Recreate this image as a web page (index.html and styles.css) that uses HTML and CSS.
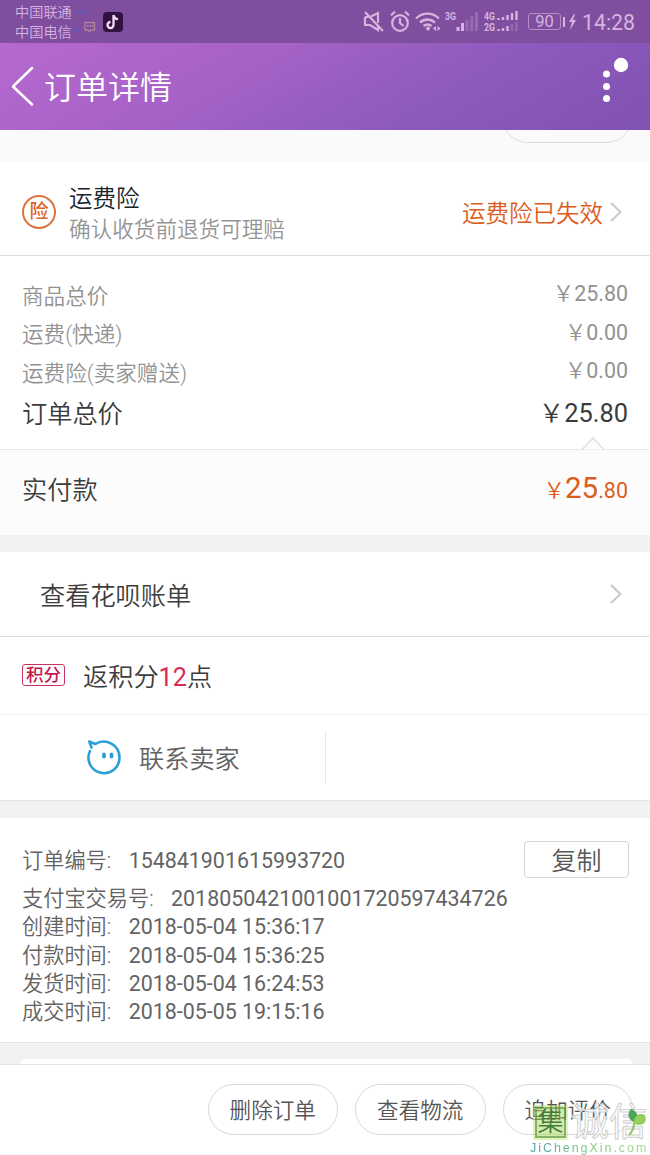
FILE: index.html
```
<!DOCTYPE html>
<html lang="zh-CN">
<head>
<meta charset="utf-8">
<title>订单详情</title>
<link rel="stylesheet" href="styles.css">
</head>
<body>
<div class="screen">
  <div class="status">
    <div class="carriers"><span>中国联通</span><span>中国电信</span></div>
    <svg class="status-left" width="52" height="43" viewBox="0 0 52 43" fill="none">
      <path d="M15 15a10 10 0 1 0-7 16" stroke="#6558b8" stroke-width="2.500" opacity=".7"/>
      <path d="M13 22.500h9.500v7.500h-3.500l-1.500 1.500-1.500-1.500h-3z" stroke="#b08595" stroke-width="1.300"/>
      <path d="M15 26h1.500m1 0h1.500m1 0h1.500" stroke="#b08595" stroke-width="2"/>
      <rect x="31" y="12" width="20" height="20" rx="4" fill="#321340"/>
      <path d="M41.500 15v10a3 3 0 1 1-3-3M41.500 15c.4 2.700 2 4 4.500 4.200" stroke="#f2dff5" stroke-width="2.300"/>
    </svg>
    <svg class="status-right" width="172" height="43" viewBox="0 0 172 43" fill="none" stroke="#d5b4e0" stroke-width="2.200">
      <path d="M3 12l18 19M3 17h5l8-4v10M3 17v8h5l8 5v-4"/>
      <circle cx="38" cy="23" r="7.800"/><path d="M38 18v5l3.500 3M29 15.500l4-4M47 15.500l-4-4"/>
      <path d="M54 18.500c6.500-6.500 16.500-6.500 23 0M58 22.500c4.500-4 10.500-4 15 0M61.500 26c2.500-2 5.500-2 8 0" stroke-width="2.400"/>
      <circle cx="66" cy="28.500" r="2" fill="#d5b4e0" stroke="none"/>
      <path d="M74 26v5l-3-2.500zM75.500 26v5l3-2.500z" fill="#d5b4e0" stroke="none"/>
      <g stroke-width="3"><path d="M96 31v-4M100.500 31v-8"/><path opacity=".28" d="M105 31V19.500M109.700 31V16M114.500 31V12"/></g>
      <g stroke-width="2.400"><path d="M136.500 20v-2M141 20v-3M145.500 20v-5M150 20v-7M154.500 20v-9M136.500 31v-2M141 31v-3M145.500 31v-5"/><path opacity=".28" d="M150 31v-7M154.500 31v-9"/></g>
      <g class="net" fill="#d5b4e0" stroke="none"><text x="83" y="20" textLength="11" lengthAdjust="spacingAndGlyphs">3G</text><text x="122" y="20" textLength="11" lengthAdjust="spacingAndGlyphs">4G</text><text x="122" y="31" textLength="11" lengthAdjust="spacingAndGlyphs">2G</text></g>
    </svg>
    <div class="battery">90</div>
    <svg class="bolt" width="14" height="18" viewBox="0 0 14 18" fill="#d5b4e0"><path d="M0 4h2v10H0zM11 1L6 9h3l-2 8 6-10h-3l2-6z"/></svg>
    <div class="clock">14:28</div>
  </div>
  <div class="header">
    <svg width="24" height="42" viewBox="0 0 24 42" fill="none" stroke="#fff" stroke-width="2.500" stroke-linecap="round" stroke-linejoin="round"><path d="M21 2L2 20.500 21 38.500"/></svg>
    <h1>订单详情</h1>
    <svg class="more" width="40" height="60" viewBox="0 0 40 60" fill="#fff"><circle cx="6.500" cy="24" r="3.500"/><circle cx="6.500" cy="36.500" r="3.500"/><circle cx="6.500" cy="48.500" r="3.500"/><circle cx="21" cy="15" r="7.200"/></svg>
  </div>
  <div class="strip"><div class="strip-pill"></div></div>
  <div class="insurance">
    <div class="badge">险</div>
    <div class="ins-text"><div class="ins-title">运费险</div><div class="ins-sub">确认收货前退货可理赔</div></div>
    <div class="ins-state">运费险已失效</div>
    <svg class="chev" width="14" height="24" viewBox="0 0 14 24"><path d="M2 3l9.500 9L2 21"/></svg>
  </div>
  <div class="totals">
    <div class="line"><span>商品总价</span><span class="amount"><i>￥</i>25.80</span></div>
    <div class="line"><span>运费(快递)</span><span class="amount"><i>￥</i>0.00</span></div>
    <div class="line"><span>运费险(卖家赠送)</span><span class="amount"><i>￥</i>0.00</span></div>
    <div class="line grand"><span>订单总价</span><span class="amount"><i>￥</i>25.80</span></div>
  </div>
  <div class="paid">
    <svg class="notch" width="26" height="14" viewBox="0 0 26 14"><path d="M2 13.500L13 2l11 11.500" fill="#fcfcfc" stroke="#dedede" stroke-width="1.500"/></svg>
    <span class="paid-label">实付款</span><span class="pay"><small><i>￥</i></small>25<small>.80</small></span>
  </div>
  <div class="gap"></div>
  <div class="bill"><span>查看花呗账单</span><svg class="chev" width="14" height="24" viewBox="0 0 14 24"><path d="M2 3l9.500 9L2 21"/></svg></div>
  <div class="points"><span class="tag">积分</span><span>返积分<b>12</b>点</span></div>
  <div class="contact">
    <div class="seller">
      <svg width="38" height="38" viewBox="0 0 38 38" fill="none" stroke="#2c9fd4" stroke-width="2.600" stroke-linecap="round" stroke-linejoin="round"><path d="M6.500 8.500L4.300 2.500l6 2.500C21-1.500 34.500 6 34.500 18.500a15.500 15.500 0 1 1-29.500-6.500"/><path d="M19 15.500v2M26.500 15.500v2" stroke-width="3.800"/></svg>
      <span>联系卖家</span>
    </div>
  </div>
  <div class="gap"></div>
  <div class="order">
    <div class="row first"><span>订单编号:</span><span>154841901615993720</span><button>复制</button></div>
    <div class="row"><span>支付宝交易号:</span><span>2018050421001001720597434726</span></div>
    <div class="row"><span>创建时间:</span><span>2018-05-04 15:36:17</span></div>
    <div class="row"><span>付款时间:</span><span>2018-05-04 15:36:25</span></div>
    <div class="row"><span>发货时间:</span><span>2018-05-04 16:24:53</span></div>
    <div class="row"><span>成交时间:</span><span>2018-05-05 19:15:16</span></div>
  </div>
  <div class="tail"><div class="card-top"></div></div>
  <div class="footer">
    <div class="pill">删除订单</div><div class="pill">查看物流</div><div class="pill">追加评价</div>
    <div class="mark">
      <div class="mark-name"><span class="mark-box">集</span><span class="mark-outline">诚信</span></div>
      <svg class="leaf" width="20" height="30" viewBox="0 0 20 30"><path d="M3 1c6 2 9 8 5 14C-1 12-1 5 3 1z" fill="#4fa55b"/><path d="M6 16C5 8 11 4 17 7c3 8-3 12-11 9z" fill="#94ce5c"/><path d="M6 15c0 6-2 9-5 12" fill="none" stroke="#8bc565" stroke-width="2"/></svg>
      <div class="mark-url">JiChengXin.com</div>
    </div>
  </div>
</div>
</body>
</html>
```
FILE: styles.css
```
* { box-sizing: border-box; }
body { margin: 0; font-family: Roboto, "Noto Sans CJK SC", sans-serif; font-weight: 350; color: #3d3d3d; background: #fff; }
i { font-style: normal; font-weight: 350; }
.screen { width: 650px; height: 1155px; overflow: hidden; display: flex; flex-direction: column; }
.screen > div { flex: none; }

.status { height: 43px; background: #804e9e; display: flex; align-items: center; color: #d5b4e0; padding-left: 15px; }
.carriers { display: flex; flex-direction: column; width: 57px; font-size: 14.200px; line-height: 19.500px; padding-top: 2px; white-space: nowrap; }
.status-right { margin-left: 238px; }
.net { font: bold 11px Roboto, sans-serif; }
.battery { width: 33px; height: 17px; margin-left: -6px; border: 1px solid #b68bc6; border-radius: 3px; font-size: 16.500px; line-height: 16px; text-align: center; font-weight: 400; }
.bolt { margin-left: 2px; }
.clock { font-size: 21.300px; margin-left: 5px; line-height: 42px; padding-top: 2px; font-weight: 400; }

.header { height: 87px; display: flex; align-items: center; padding-left: 11px; background: linear-gradient(150deg, #b669cf 0%, #a662c7 35%, #8e5abd 66%, #8052b2 100%); }
h1 { margin: 0 0 0 9px; color: #fff; font-size: 32px; font-weight: 350; line-height: 87px; padding-top: 4px; }
.more { margin: -13px 10px 0 auto; }

.strip { height: 32px; background: #fafafa; }
.strip-pill { width: 130px; height: 51px; border: 1px solid #dfdcdf; border-radius: 26px; margin: -38px 0 0 502px; clip-path: inset(38px 0 0 0); }

.insurance { height: 94px; border-bottom: 1px solid #dedede; display: flex; align-items: center; padding: 6px 27px 0 22px; }
.badge { width: 34px; height: 34px; border: 2px solid #dc7442; border-radius: 50%; color: #dc6429; font-size: 19px; line-height: 30px; text-align: center; font-weight: 500; }
.ins-text { margin-left: 13px; white-space: nowrap; padding-top: 6px; }
.ins-title { font-size: 23.500px; line-height: 31px; color: #17232d; }
.ins-sub { font-size: 21.600px; line-height: 30px; color: #949494; }
.ins-state { margin-left: auto; color: #dc5c20; font-size: 23.500px; line-height: 34px; padding-top: 4px; }
.chev { fill: none; stroke: #c8c8c8; stroke-width: 2; margin-left: 6px; }

.totals { height: 193px; padding: 21.500px 22px 0; font-size: 21.600px; color: #929292; }
.line { height: 38.500px; line-height: 38.500px; display: flex; justify-content: space-between; }
.amount { margin-top: -2.500px; font-weight: 400; font-size: 21.400px; }
.grand { height: 44px; line-height: 44px; font-size: 25.200px; color: #3b3b3b; }
.grand .amount { font-size: 25.400px; }

.paid { height: 86px; border-top: 1px solid #e9e9e9; background: #fcfcfc; padding: 0 22px 6px; display: flex; justify-content: space-between; align-items: center; font-size: 25.200px; position: relative; }
.paid-label { padding-bottom: 4px; }
.notch { position: absolute; right: 44px; top: -14px; }
.pay { color: #dc5c20; font-size: 29.500px; line-height: 44px; font-weight: 400; }
.pay small { font-size: 21.500px; }
.gap { height: 17px; background: #f2f2f2; }

.bill { height: 85px; border-bottom: 1px solid #dedede; padding: 0 27px 0 40px; display: flex; align-items: center; justify-content: space-between; font-size: 25.200px; }
.points { height: 78px; border-bottom: 1px solid #f1f1f1; padding: 0 22px 2px; display: flex; align-items: center; font-size: 25.200px; }
.tag { width: 43px; height: 22px; border: 1px solid #c93362; border-radius: 3px; margin: 0 18px 0 0; color: #c3184e; font-size: 17.500px; line-height: 20px; text-align: center; font-weight: 500; }
.points b { color: #d42d58; font-weight: 400; }
.contact { height: 86px; border-bottom: 1px solid #e3e3e3; display: flex; align-items: center; }
.seller { width: 326px; height: 51px; border-right: 1px solid #e6e6e6; display: flex; align-items: center; padding-left: 85px; color: #616161; font-size: 25.200px; }
.seller span { margin-left: 16px; padding-bottom: 2px; }

.order { height: 224px; padding: 23px 22px 0; color: #636363; font-size: 21.400px; font-weight: 400; }
.row { height: 28.300px; line-height: 28.300px; display: flex; white-space: pre; }
.row span:first-child { margin-right: 17.500px; font-weight: 350; font-size: 21.200px; }
.row.first { height: 44px; line-height: 40px; }
.row button { margin: 0 -1px 0 auto; width: 105px; height: 37px; border: 1px solid #d3d3d3; border-radius: 4px; background: #fff; color: #575757; font: 350 25px/33px "Noto Sans CJK SC", sans-serif; padding: 0; }

.tail { height: 22px; background: #f2f2f2; border-top: 1px solid #e7e7e7; padding: 16px 18px 0 20px; }
.card-top { height: 5px; background: #fff; border-radius: 5px 5px 0 0; }
.footer { height: 91px; border-top: 1px solid #e4e4e4; display: flex; justify-content: flex-end; gap: 17px; padding: 19px 17px 0; position: relative; }
.pill { width: 130.500px; height: 51px; border: 1px solid #d8d8d8; border-radius: 26px; text-align: center; line-height: 52px; font-size: 21.600px; color: #555; }
.mark { position: absolute; left: 530px; top: 40px; width: 120px; height: 50px; }
.mark-name { display: flex; align-items: center; height: 34px; }
.mark-box { width: 31px; height: 31px; margin-left: 5px; background: rgba(167, 216, 83, .5); box-shadow: 0 0 0 2px rgba(190, 230, 100, .45); border: 2px solid rgba(70, 130, 55, .55); color: #447c3e; font-size: 26px; line-height: 26px; display: flex; justify-content: center; }
.mark-outline { font-size: 38px; line-height: 34px; font-weight: 400; margin-left: 5px; color: rgba(255, 255, 255, .8); -webkit-text-stroke: 1px #d0d0d0; white-space: nowrap; }
.leaf { position: absolute; left: 98px; top: 3px; }
.mark-url { font: 12.500px/14px "Liberation Sans", sans-serif; letter-spacing: 1.950px; color: #8fc982; white-space: nowrap; background: linear-gradient(90deg, #4e9fa5, #84c881 55%, #a9d68c); background-clip: text; -webkit-text-fill-color: transparent; margin-top: 2px; }
```
